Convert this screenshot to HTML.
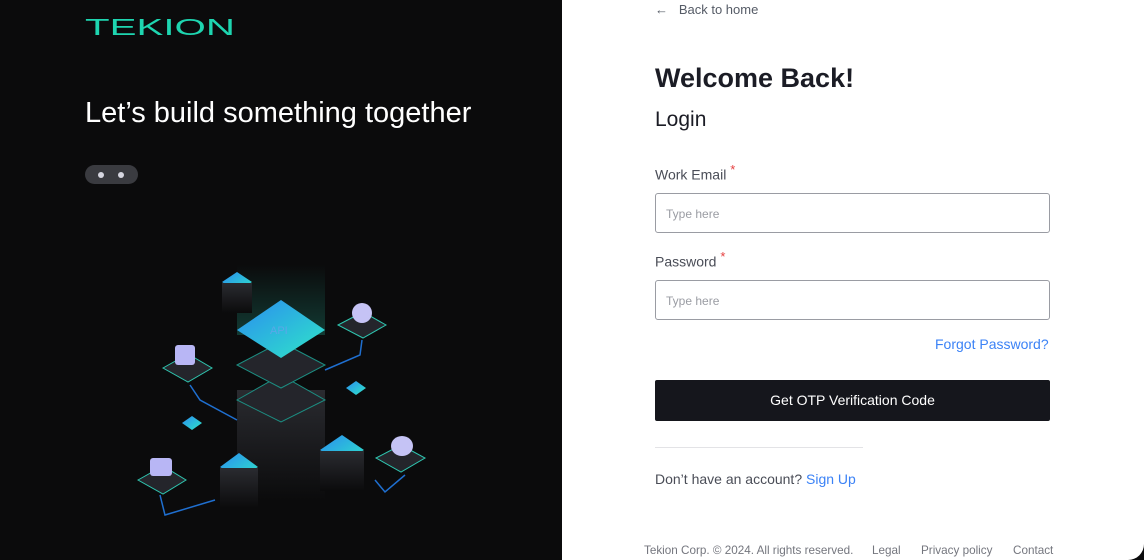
<!DOCTYPE html>
<html><head><meta charset="utf-8"><style>
*{margin:0;padding:0;box-sizing:border-box}
body{width:1144px;height:560px;background:#0b0b0c;font-family:"Liberation Sans",sans-serif;position:relative;overflow:hidden}
.left{position:absolute;left:0;top:0;width:562px;height:560px;background:#0b0b0c}
.tag{position:absolute;left:85px;top:97px;font-size:29px;color:#fff}
.dots{position:absolute;left:85px;top:165px;width:53px;height:19px;border-radius:10px;background:#3a3b40}
.dots i{position:absolute;top:7px;width:6px;height:6px;border-radius:50%;background:#d6d6e0}
.right{position:absolute;left:562px;top:0;width:582px;height:560px;background:#fff;border-radius:0 0 16px 0}
.abs{position:absolute}
.back{left:93px;top:2px;font-size:13px;color:#555b66}
h1{position:absolute;left:93px;top:63px;font-size:27px;color:#1b1c25;font-weight:700}
h2{position:absolute;left:93px;top:108px;font-size:21px;color:#1b1c25;font-weight:400}
.lbl{font-size:14px;color:#4a4d57}
.lbl sup{color:#e53e3e;font-size:13px}
.inp{left:93px;width:395px;height:40px;border:1px solid #9a9ca3;border-radius:3px;font-size:12px;color:#9a9ca3;padding:13px 10px}
.forgot{left:373px;top:336px;font-size:14px;color:#3b82f6}
.btn{left:93px;top:380px;width:395px;height:41px;background:#15161c;color:#fff;font-size:14px;text-align:center;line-height:41px;border-radius:2px}
.hr{left:93px;top:447px;width:208px;height:1px;background:#e3e3e6}
.foot{top:544px;font-size:11.7px;color:#74767e}
</style></head><body>
<div class="left">
<svg class="abs" style="left:85px;top:10px" width="160" height="30"><text x="0" y="25" font-size="23" fill="#1ed5b0" textLength="150" lengthAdjust="spacingAndGlyphs" font-family="Liberation Sans">TEKION</text></svg>
<div class="tag">Let’s build something together</div>
<div class="dots"><i style="left:13px"></i><i style="left:33px"></i></div>
<svg class="abs" style="left:120px;top:250px" width="320" height="280" viewBox="0 0 320 280">
<defs>
<linearGradient id="g" x1="0" y1="0" x2="1" y2="1"><stop offset="0" stop-color="#2a8cf0"/><stop offset="1" stop-color="#2fe6c8"/></linearGradient>
<linearGradient id="p" x1="0" y1="0" x2="0" y2="1"><stop offset="0" stop-color="#2a2b30"/><stop offset="1" stop-color="#0b0b0c"/></linearGradient>
<linearGradient id="glow" x1="0" y1="0" x2="0" y2="1"><stop offset="0" stop-color="#0b0b0c"/><stop offset="1" stop-color="#123a33"/></linearGradient>
</defs>
<rect x="117" y="15" width="88" height="70" fill="url(#glow)"/>
<rect x="117" y="140" width="88" height="110" fill="url(#p)"/>
<path d="M117 150 L161 125 L205 150 L161 172Z" fill="#24252b" stroke="#1c8f83"/>
<path d="M117 115 L161 92 L205 115 L161 138Z" fill="#24252b" stroke="#1c8f83"/>
<path d="M117 80 L161 50 L205 80 L161 108Z" fill="url(#g)"/>
<text x="150" y="84" font-size="11" fill="#5aa8e8" font-family="Liberation Sans">API</text>
<path d="M102 32 L117 22 L132 32 L117 42Z" fill="url(#g)"/><rect x="102" y="33" width="30" height="30" fill="url(#p)"/>
<path d="M226 138 L236 131 L246 138 L236 145Z" fill="url(#g)"/>
<path d="M62 173 L72 166 L82 173 L72 180Z" fill="url(#g)"/>
<path d="M100 217 L119 203 L138 217 L119 229Z" fill="url(#g)"/><rect x="100" y="218" width="38" height="40" fill="url(#p)"/>
<path d="M200 200 L222 185 L244 200 L222 214Z" fill="url(#g)"/><rect x="200" y="201" width="44" height="40" fill="url(#p)"/>
<path d="M43 118 L68 104 L92 118 L68 132Z" fill="#24252b" stroke="#2fc6b0"/><rect x="55" y="95" width="20" height="20" rx="3" fill="#b8b6f5"/>
<path d="M218 75 L243 62 L266 75 L243 88Z" fill="#24252b" stroke="#2fc6b0"/><circle cx="242" cy="63" r="10" fill="#c5c3f5"/>
<path d="M18 230 L43 216 L66 230 L43 244Z" fill="#24252b" stroke="#2fc6b0"/><rect x="30" y="208" width="22" height="18" rx="3" fill="#b8b6f5"/>
<path d="M256 208 L281 195 L305 208 L281 222Z" fill="#24252b" stroke="#2fc6b0"/><ellipse cx="282" cy="196" rx="11" ry="10" fill="#c5c3f5"/>
<path d="M70 135 L80 150 L117 170 M205 120 L240 105 L242 90 M40 245 L45 265 L95 250 M255 230 L265 242 L285 225" stroke="#1f6fd0" stroke-width="1.5" fill="none"/>
</svg>
</div>
<div class="right">
<div class="abs back">←&nbsp;&nbsp; Back to home</div>
<h1>Welcome Back!</h1>
<h2>Login</h2>
<div class="abs lbl" style="left:93px;top:162px">Work Email <sup>*</sup></div>
<div class="abs inp" style="top:193px">Type here</div>
<div class="abs lbl" style="left:93px;top:249px">Password <sup>*</sup></div>
<div class="abs inp" style="top:280px">Type here</div>
<div class="abs forgot">Forgot Password?</div>
<div class="abs btn">Get OTP Verification Code</div>
<div class="abs hr"></div>
<div class="abs lbl" style="left:93px;top:471px">Don’t have an account? <span style="color:#3b82f6">Sign Up</span></div>
<div class="abs foot" style="left:82px">Tekion Corp. © 2024. All rights reserved.</div>
<div class="abs foot" style="left:310px">Legal</div>
<div class="abs foot" style="left:359px">Privacy policy</div>
<div class="abs foot" style="left:451px">Contact</div>
</div>
</body></html>
